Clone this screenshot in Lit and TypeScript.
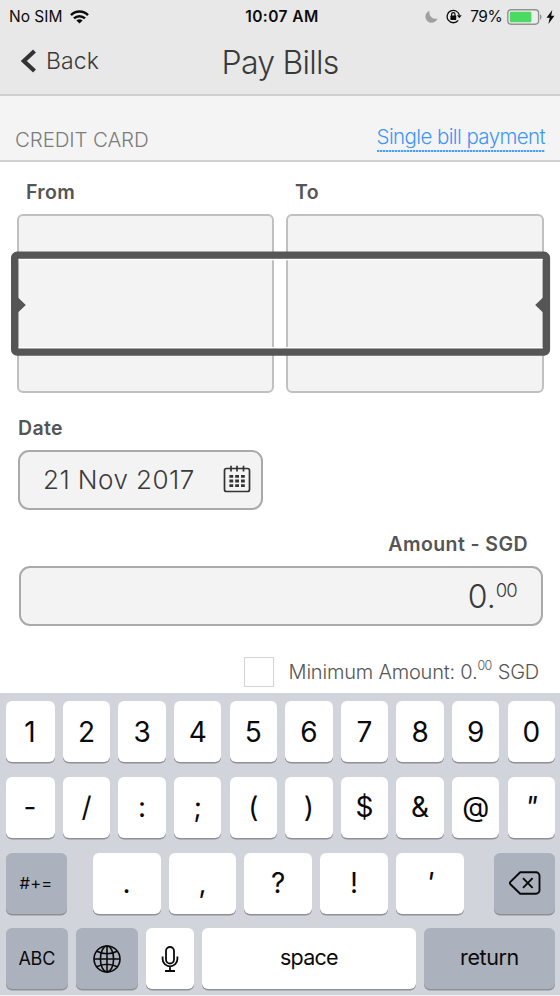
import { LitElement, html, css } from "lit";
import { customElement, property } from "lit/decorators.js";

@customElement("key-cap")
class KeyCap extends LitElement {
  @property({ reflect: true }) tone = "light";
  static styles = css`
    :host {
      display: flex;
      align-items: center;
      justify-content: center;
      box-sizing: border-box;
      height: 61px;
      border-radius: 6px;
      background: #fff;
      box-shadow: 0 1.5px 0 #8d9096;
      color: #0a0a0a;
      font-size: 28px;
      line-height: 30px;
      white-space: pre;
      min-width: 0;
    }
    :host([tone="dark"]) { background: #abb2bd; }
  `;
  render() {
    return html`<slot></slot>`;
  }
}

const numbers = ["1", "2", "3", "4", "5", "6", "7", "8", "9", "0"];
const symbols = ["-", "/", ":", ";", "(", ")", "$", "&", "@"];
const punctuation = [".", ",", "?", "!"];

@customElement("app-root")
class AppRoot extends LitElement {
  static styles = css`
    :host {
      display: flex;
      flex-direction: column;
      box-sizing: border-box;
      width: 560px;
      height: 996px;
      overflow: hidden;
      background: #fff;
      font-family: Inter, "Liberation Sans", sans-serif;
      color: #3a3a3a;
      white-space: nowrap;
    }
    svg { display: block; flex: none; }
    .header { height: 96px; box-sizing: border-box; background: #e8e8e8; border-bottom: 2px solid #cfcfcf; }
    .status {
      display: grid; grid-template-columns: 1fr auto 1fr; align-items: center;
      height: 33px; padding: 0 5px 0 9px; font-size: 15.5px; line-height: 20px; color: #0c0c0c;
    }
    .carrier { display: flex; align-items: center; gap: 8px; }
    .clock { font-weight: 600; letter-spacing: 0.45px; }
    .indicators { display: flex; align-items: center; justify-content: flex-end; }
    .moon { margin-right: 8px; }
    .lock { margin-right: 8px; }
    .pct { letter-spacing: -0.6px; }
    .battery { margin: 0 4px 0 5px; }
    .nav { display: grid; grid-template-columns: 1fr auto 1fr; align-items: center; height: 58px; padding: 0 21px; }
    .back { display: flex; align-items: center; gap: 9px; font-size: 23px; line-height: 26px; font-weight: 300; letter-spacing: 0.1px; margin-top: -2px; }
    .title { font-size: 32px; line-height: 36px; font-weight: 300; letter-spacing: -0.75px; padding-top: 1px; }
    .section {
      display: flex; justify-content: space-between; box-sizing: border-box; height: 66px;
      padding: 30px 15px 0 15px; background: #f4f4f4; border-bottom: 2px solid #d0d0d0;
    }
    .name { font-size: 20.5px; line-height: 28px; font-weight: 300; color: #7c7c7c; letter-spacing: -0.15px; }
    .link {
      height: 26px; font-size: 20.5px; line-height: 22px; font-weight: 300; color: #3d97f5; letter-spacing: -0.6px;
      background: repeating-linear-gradient(90deg, #4b9ff6 0 1.7px, #b4d6fb 1.7px 3px) left bottom / 100% 2px no-repeat;
    }
    .form { display: flex; flex-direction: column; flex: 1; padding: 18px 16px 0 17px; }
    .label { font-size: 19.5px; line-height: 24px; font-weight: 600; color: #555; letter-spacing: 0.35px; }
    .accounts { position: relative; display: grid; grid-template-columns: 257px 258px; column-gap: 12px; }
    .accounts .label { padding-left: 9px; }
    .slot { height: 179px; margin-top: 10px; box-sizing: border-box; border: 2px solid #c0c0c0; border-radius: 6px; background: #f3f3f3; }
    .picker { position: absolute; left: -6px; top: 71px; }
    .date-label { margin-top: 23px; padding-left: 1px; }
    .date {
      display: flex; align-items: center; justify-content: space-between; box-sizing: border-box;
      width: 245px; height: 60px; margin: 10px 0 0 1px; padding: 0 10px 2px 23px;
      border: 2px solid #aaa; border-radius: 11px; background: #f3f3f3;
      font-size: 26px; font-weight: 300; letter-spacing: 0.45px;
    }
    .amount-label { margin: 22px 16px 0 0; text-align: right; letter-spacing: 0.42px; }
    .amount {
      display: flex; justify-content: flex-end; box-sizing: border-box; height: 60px; margin: 10px 1px 0 2px;
      padding: 11px 24px 0 0; border: 2px solid #aaa; border-radius: 11px; background: #f3f3f3;
      font-size: 32px; line-height: 36px; font-weight: 300;
    }
    .cents { font-size: 18.5px; line-height: 23px; letter-spacing: -0.8px; }
    .minimum { display: flex; align-items: center; justify-content: flex-end; margin: 31px 5px 0 0; height: 30px; font-size: 20px; line-height: 28px; font-weight: 300; color: #555; letter-spacing: -0.2px; }
    .box { width: 30px; height: 30px; box-sizing: border-box; margin-right: 15px; border: 1.5px solid #d4d4d4; background: #fff; }
    .tiny { font-size: 12.5px; line-height: 16px; margin: -13px 6px 0 0; letter-spacing: -0.6px; }
    .keyboard { box-sizing: border-box; height: 303px; padding: 8px 5px 5px 5.5px; background: #d1d5db; border-bottom: 1px solid #f1f2f4; display: flex; flex-direction: column; gap: 14.8px; }
    .ten { display: grid; grid-template-columns: 49px repeat(9, 47.3px); justify-content: space-between; }
    .puncts { display: flex; gap: 8px; margin-left: 9px; margin-right: 13px; }
    .row { display: flex; justify-content: space-between; }
    .w61 { width: 61px; font-size: 16.5px; }
    .w68 { width: 67.8px; }
    .backspace { padding-left: 2px; }
    .abc { width: 62.5px; font-size: 18px; letter-spacing: -0.2px; }
    .globe { width: 62px; }
    .mic { width: 47.5px; }
    .space, .return { font-size: 21.5px; padding-bottom: 4px; letter-spacing: -0.4px; }
    .space { width: 214px; letter-spacing: -0.8px; }
    .return { width: 131px; }
    .prime { font-style: italic; }
    .symbols { letter-spacing: 0.3px; }
  `;

  render() {
    return html`
      <div class="header">
        <div class="status">
          <div class="carrier"><span class="sim">No SIM</span>
            <svg width="19" height="14" viewBox="0 0 19 14" fill="none" stroke="#0c0c0c" stroke-width="2.5">
              <path d="M1 5.1a12 12 0 0 1 17 0M4 8.4a7.8 7.8 0 0 1 11 0"/><path d="M9.5 13.6 6.4 10.5a4.4 4.4 0 0 1 6.2 0z" fill="#0c0c0c" stroke="none"/>
            </svg>
          </div>
          <div class="clock">10:07 AM</div>
          <div class="indicators">
            <svg class="moon" width="13" height="13" viewBox="0 0 13 13"><path d="M4.6 .7A6.2 6.2 0 1 0 12.5 8.5 6.3 6.3 0 0 1 4.6 .7z" fill="#a0a0a0"/></svg>
            <svg class="lock" width="16" height="15" viewBox="0 0 16 15" fill="none" stroke="#0c0c0c" stroke-width="1.3">
              <path d="M12.2 11.4a6.2 6.2 0 1 1 1.2-5.2"/><path d="M10.9 6.3h4.8l-2.4 3z" fill="#0c0c0c" stroke="none"/>
              <rect x="4.4" y="6.6" width="5.8" height="4.5" rx=".6" fill="#0c0c0c" stroke="none"/><path d="M5.6 7V5.4a1.7 1.7 0 0 1 3.4 0V7" stroke-width="1.2"/>
            </svg>
            <span class="pct">79%</span>
            <svg class="battery" width="35" height="16" viewBox="0 0 35 16">
              <rect x=".8" y=".8" width="30.8" height="14.4" rx="3.4" fill="#ededed" stroke="#929292" stroke-width="1.4"/>
              <rect x="2.8" y="2.8" width="21.6" height="10.4" rx="1.2" fill="#4cd964"/>
              <path d="M33 5.3c2 .8 2 4.6 0 5.4z" fill="#929292"/>
            </svg>
            <svg class="bolt" width="9" height="14" viewBox="0 0 9 14"><path d="M6.3 0 .5 7.7h3.2L2.4 14l6.1-8.2H5.2z" fill="#0c0c0c"/></svg>
          </div>
        </div>
        <div class="nav">
          <div class="back">
            <svg width="16" height="24" viewBox="0 0 16 24"><path d="M13.5 2 2.8 12 13.5 22" fill="none" stroke="#333" stroke-width="4.2"/></svg>
            <span>Back</span>
          </div>
          <div class="title">Pay Bills</div>
        </div>
      </div>
      <div class="section"><div class="name">CREDIT CARD</div><div class="link">Single bill payment</div></div>
      <div class="form">
        <div class="accounts">
          <div><div class="label">From</div><div class="slot"></div></div>
          <div><div class="label">To</div><div class="slot"></div></div>
          <svg class="picker" width="540" height="106" viewBox="0 0 540 106">
            <path d="M7.5 8.6H531.8M7.5 96.8H531.8" stroke="#fff" stroke-width="1.4"/>
            <rect x="3.6" y="4.2" width="531.9" height="97" rx="2.5" fill="none" stroke="#555" stroke-width="7.2"/>
            <path d="M7 46.5 14.8 54 7 61.5zM532 46.5 524.2 54 532 61.5z" fill="#555"/>
          </svg>
        </div>
        <div class="label date-label">Date</div>
        <div class="date"><span class="day">21 Nov 2017</span>
          <svg width="28" height="28" viewBox="0 0 28 28" fill="none" stroke="#333" stroke-width="1.7">
            <rect x="1.5" y="3.5" width="25" height="23" rx="2"/>
            <path d="M8 .8v5.6M14 .8v5.6M20.5 .8v5.6"/>
            <path d="M6.4 11.4h16M6.4 16h16M6.4 20.6h16" stroke-width="2.8" stroke-dasharray="3.8 2"/>
          </svg>
        </div>
        <div class="label amount-label">Amount - SGD</div>
        <div class="amount"><span>0.</span><span class="cents">00</span></div>
        <div class="minimum"><span class="box"></span><span>Minimum Amount: 0.</span><span class="tiny">00</span><span>SGD</span></div>
      </div>
      <div class="keyboard">
        <div class="ten">${numbers.map((k) => html`<key-cap>${k}</key-cap>`)}</div>
        <div class="ten">${symbols.map((k) => html`<key-cap>${k}</key-cap>`)}<key-cap class="prime">"</key-cap></div>
        <div class="row">
          <key-cap class="w61 symbols" tone="dark">#+=</key-cap>
          <div class="puncts">${punctuation.map((k) => html`<key-cap class="w68">${k}</key-cap>`)}<key-cap class="w68 prime">'</key-cap></div>
          <key-cap class="w61 backspace" tone="dark">
            <svg width="32" height="24" viewBox="0 0 32 24" fill="none" stroke="#0a0a0a" stroke-width="1.9">
              <path d="M11.2 1.3H27a3.5 3.5 0 0 1 3.5 3.5v14.4a3.5 3.5 0 0 1-3.5 3.5H11.2L1.4 13.2a1.7 1.7 0 0 1 0-2.4z" stroke-linejoin="round"/>
              <path d="m14 7.2 9.6 9.6m0-9.6L14 16.8"/>
            </svg>
          </key-cap>
        </div>
        <div class="row">
          <key-cap class="abc" tone="dark">ABC</key-cap>
          <key-cap class="globe" tone="dark">
            <svg width="28" height="28" viewBox="0 0 28 28" fill="none" stroke="#0a0a0a" stroke-width="1.6">
              <circle cx="14" cy="14" r="13"/><ellipse cx="14" cy="14" rx="6.6" ry="13"/><path d="M14 1v26M1 14h26M3.8 6.2q10.2 5 20.4 0M3.8 21.8q10.2-5 20.4 0"/>
            </svg>
          </key-cap>
          <key-cap class="mic">
            <svg width="18" height="26" viewBox="0 0 18 26" fill="none" stroke="#0a0a0a" stroke-width="1.8">
              <rect x="5" y="1" width="8" height="16.5" rx="4"/><path d="M1.6 10.5V13a7.4 7.4 0 0 0 14.8 0v-2.5M9 20.5V25M4 25h10"/>
            </svg>
          </key-cap>
          <key-cap class="space">space</key-cap>
          <key-cap class="return" tone="dark">return</key-cap>
        </div>
      </div>
    `;
  }
}
